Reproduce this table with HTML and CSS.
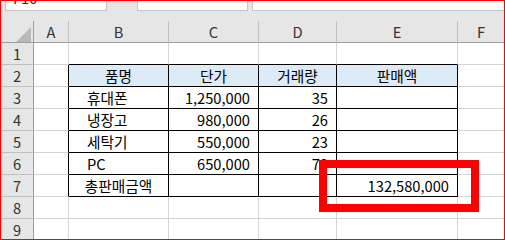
FILE: index.html
```html
<!DOCTYPE html>
<html lang="ko">
<head>
<meta charset="utf-8">
<link rel="stylesheet" href="styles.css">
</head>
<body>
<div class="frame">
  <div class="topbar">
    <div class="namebox"><span class="nb-text">F10</span></div>
    <div class="fbox mid"></div>
    <div class="fbox wide"></div>
  </div>
  <div class="sheet">
    <div class="c h corner"><span class="tri"></span></div>
    <div class="c h">A</div>
    <div class="c h">B</div>
    <div class="c h">C</div>
    <div class="c h">D</div>
    <div class="c h">E</div>
    <div class="c h last">F</div>

    <div class="c rh">1</div>
    <div class="c"></div>
    <div class="c tb"></div>
    <div class="c tb"></div>
    <div class="c tb"></div>
    <div class="c tb"></div>
    <div class="c last"></div>

    <div class="c rh">2</div>
    <div class="c tr"></div>
    <div class="c t head ctr">품명</div>
    <div class="c t head ctr">단가</div>
    <div class="c t head ctr">거래량</div>
    <div class="c t head ctr">판매액</div>
    <div class="c last"></div>

    <div class="c rh">3</div>
    <div class="c tr"></div>
    <div class="c t ind">휴대폰</div>
    <div class="c t num">1,250,000</div>
    <div class="c t num">35</div>
    <div class="c t"></div>
    <div class="c last"></div>

    <div class="c rh">4</div>
    <div class="c tr"></div>
    <div class="c t ind">냉장고</div>
    <div class="c t num">980,000</div>
    <div class="c t num">26</div>
    <div class="c t"></div>
    <div class="c last"></div>

    <div class="c rh">5</div>
    <div class="c tr"></div>
    <div class="c t ind">세탁기</div>
    <div class="c t num">550,000</div>
    <div class="c t num">23</div>
    <div class="c t"></div>
    <div class="c last"></div>

    <div class="c rh">6</div>
    <div class="c tr"></div>
    <div class="c t ind">PC</div>
    <div class="c t num">650,000</div>
    <div class="c t num">70</div>
    <div class="c t"></div>
    <div class="c last"></div>

    <div class="c rh">7</div>
    <div class="c tr"></div>
    <div class="c t ctr">총판매금액</div>
    <div class="c t"></div>
    <div class="c t"></div>
    <div class="c t num">132,580,000</div>
    <div class="c last"></div>

    <div class="c rh">8</div>
    <div class="c"></div>
    <div class="c"></div>
    <div class="c"></div>
    <div class="c"></div>
    <div class="c"></div>
    <div class="c last"></div>

    <div class="c rh">9</div>
    <div class="c"></div>
    <div class="c"></div>
    <div class="c"></div>
    <div class="c"></div>
    <div class="c"></div>
    <div class="c last"></div>
  </div>
  <div class="highlight"></div>
</div>
</body>
</html>
```

FILE: styles.css
```css
html, body {
  margin: 0;
  padding: 0;
  background: #ffffff;
}

.frame {
  position: relative;
  box-sizing: border-box;
  width: 505px;
  height: 240px;
  border: 1px solid #ff0000;
  overflow: hidden;
  background: #e6e6e6;
  font-family: "Noto Sans CJK KR", "Noto Sans", sans-serif;
  font-size: 14.67px;
  color: #000;
}

.topbar {
  display: flex;
  height: 10px;
  padding-left: 4px;
  background: #e6e6e6;
}

.namebox {
  box-sizing: border-box;
  width: 102px;
  height: 10px;
  background: #fff;
  border: 1px solid #c6c6c6;
  border-top: 0;
  overflow: hidden;
  display: flex;
  align-items: flex-end;
}

.nb-text {
  display: block;
  line-height: 16px;
  margin-bottom: 4px;
  padding-left: 7px;
  color: #333;
}

.fbox {
  box-sizing: border-box;
  height: 10px;
  background: #fff;
  border: 1px solid #c6c6c6;
  border-top: 0;
}

.fbox.mid {
  width: 111px;
  margin-left: 30px;
}

.fbox.wide {
  flex: 1;
  margin-left: 4px;
  border-right: 0;
}

.sheet {
  display: grid;
  grid-template-columns: 33px 35px 100px 90px 78px 121px 46px;
  grid-template-rows: 32px repeat(9, 22px);
  background: #e6e6e6;
}

.c {
  box-sizing: border-box;
  display: flex;
  align-items: center;
  background: #fff;
  border-right: 1px solid #d4d4d4;
  border-bottom: 1px solid #d4d4d4;
  white-space: nowrap;
  line-height: 20px;
}

.c.last {
  border-right: 0;
}

.h {
  align-self: end;
  height: 22px;
  justify-content: center;
  background: #e6e6e6;
  border-right: 1px solid #c0c0c0;
  border-bottom: 1px solid #9e9e9e;
  color: #333;
}

.corner {
  position: relative;
  border-right-color: #9e9e9e;
}

.tri {
  position: absolute;
  right: 2px;
  bottom: 0;
  width: 0;
  height: 0;
  border-left: 15px solid transparent;
  border-bottom: 15px solid #b9b9b9;
}

.rh {
  justify-content: center;
  background: #e6e6e6;
  border-right: 1px solid #9e9e9e;
  border-bottom: 1px solid #c0c0c0;
  color: #333;
}

.tb {
  border-bottom-color: #000;
}

.tr {
  border-right-color: #000;
}

.t {
  border-right-color: #000;
  border-bottom-color: #000;
}

.head {
  background: #ddebf7;
}

.ctr {
  justify-content: center;
}

.ind {
  padding-left: 18px;
}

.num {
  justify-content: flex-end;
  padding-right: 8px;
}

.highlight {
  position: absolute;
  left: 318px;
  top: 159px;
  width: 160px;
  height: 52px;
  box-sizing: border-box;
  border: 8px solid #ff0000;
}
```
